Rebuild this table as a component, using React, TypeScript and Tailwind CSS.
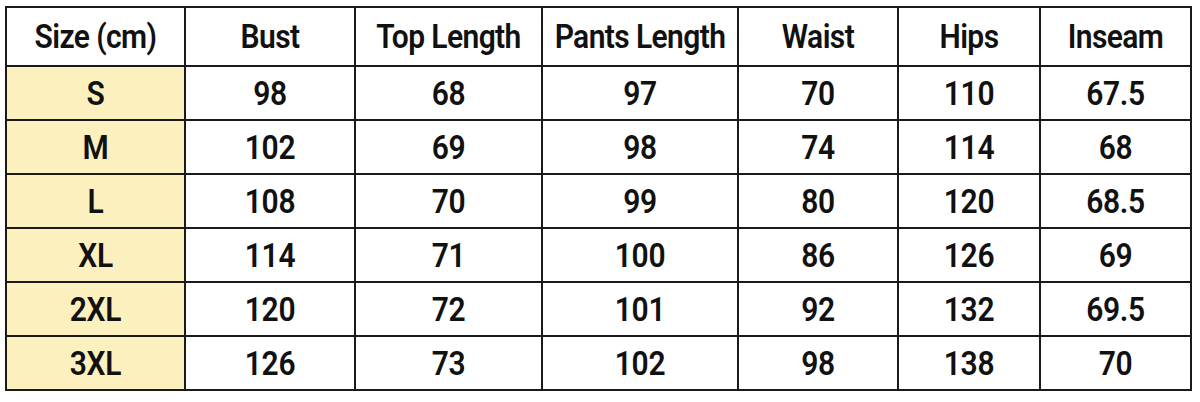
const headers = ['Size (cm)', 'Bust', 'Top Length', 'Pants Length', 'Waist', 'Hips', 'Inseam'];

const rows: string[][] = [
  ['S', '98', '68', '97', '70', '110', '67.5'],
  ['M', '102', '69', '98', '74', '114', '68'],
  ['L', '108', '70', '99', '80', '120', '68.5'],
  ['XL', '114', '71', '100', '86', '126', '69'],
  ['2XL', '120', '72', '101', '92', '132', '69.5'],
  ['3XL', '126', '73', '102', '98', '138', '70'],
];

const colWidths = ['w-[179px]', 'w-[170px]', 'w-[187px]', 'w-[196px]', 'w-[160px]', 'w-[142px]', 'w-[151px]'];

export default function App() {
  return (
    <div className="w-[1200px] h-[402px] bg-white pt-[6px] pl-[5px] font-['Roboto',sans-serif] text-[#111]">
      <table className="border-collapse table-fixed w-[1186px]">
        <colgroup>
          {colWidths.map((w, i) => (
            <col key={i} className={w} />
          ))}
        </colgroup>
        <thead>
          <tr className="h-[59px]">
            {headers.map((h) => (
              <th
                key={h}
                className="border-2 border-[#1a1a1a] text-[30px] font-semibold tracking-[-0.6px] text-center align-middle"
              >
                <span className="inline-block scale-y-[1.1]">{h}</span>
              </th>
            ))}
          </tr>
        </thead>
        <tbody>
          {rows.map((r) => (
            <tr key={r[0]} className="h-[54px]">
              {r.map((c, i) => (
                <td
                  key={i}
                  className={`border-2 border-[#1a1a1a] text-[30px] font-semibold tracking-[-0.3px] text-center align-middle ${
                    i === 0 ? 'bg-[#fcf0bf]' : 'bg-white'
                  }`}
                >
                  <span className="inline-block scale-y-[1.12]">{c}</span>
                </td>
              ))}
            </tr>
          ))}
        </tbody>
      </table>
    </div>
  );
}
